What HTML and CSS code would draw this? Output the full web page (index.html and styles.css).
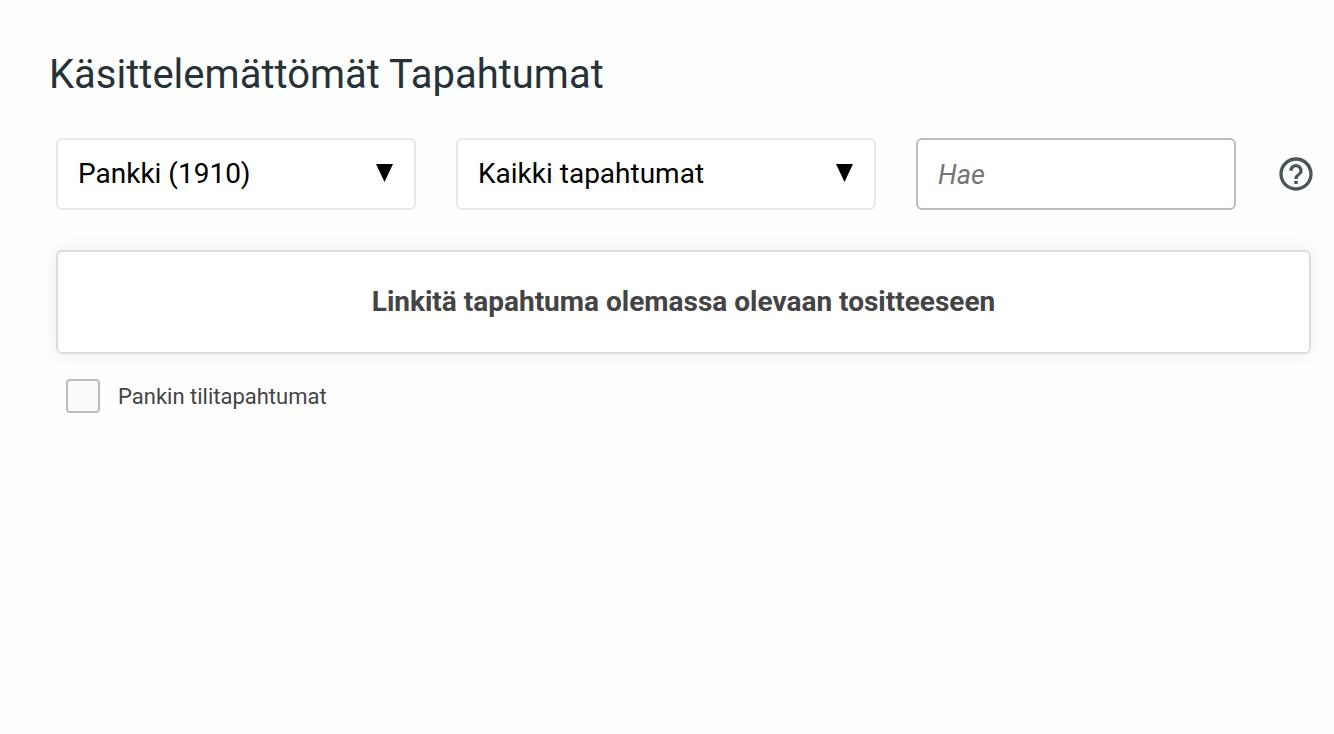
FILE: index.html
```html
<!DOCTYPE html>
<html lang="fi">
<head>
    <meta charset="UTF-8">
    <meta name="viewport" content="width=device-width, initial-scale=1.0">
    <title>Käsittelemättömät Tapahtumat</title>
    <link rel="stylesheet" href="styles.css">
</head>
<body>
    <main class="events">
        <h1>Käsittelemättömät Tapahtumat</h1>

        <form class="filters">
            <div class="select account">
                <select aria-label="Tili">
                    <option>Pankki (1910)</option>
                </select>
            </div>
            <div class="select type">
                <select aria-label="Tapahtumat">
                    <option>Kaikki tapahtumat</option>
                </select>
            </div>
            <input class="search" type="text" placeholder="Hae" aria-label="Hae">
            <button class="help" type="button" aria-label="Ohje">
                <svg viewBox="0 0 24 24" width="40" height="40" fill="currentColor">
                    <path d="M11 18h2v-2h-2v2zm1-16C6.48 2 2 6.48 2 12s4.48 10 10 10 10-4.480 10-10S17.520 2 12 2zm0 18c-4.410 0-8-3.590-8-8s3.590-8 8-8 8 3.590 8 8-3.590 8-8 8zm0-14c-2.210 0-4 1.790-4 4h2c0-1.100.9-2 2-2s2 .9 2 2c0 2-3 1.750-3 5h2c0-2.250 3-2.500 3-5 0-2.210-1.790-4-4-4z"/>
                </svg>
            </button>
        </form>

        <button class="link-event" type="button">Linkitä tapahtuma olemassa olevaan tositteeseen</button>

        <div class="check-row">
            <input type="checkbox" id="bank-events">
            <label for="bank-events">Pankin tilitapahtumat</label>
        </div>
    </main>
</body>
</html>
```
FILE: styles.css
```css
* {
    margin: 0;
    padding: 0;
    box-sizing: border-box;
}

body {
    font-family: Roboto, sans-serif;
    background: #fefefe;
    color: #444;
}

.events {
    padding: 51px 23px 24px 56px;
}

h1 {
    margin-left: -7px;
    font-size: 40px;
    line-height: 48px;
    font-weight: 400;
    color: #263238;
}

.filters {
    display: flex;
    align-items: center;
    gap: 40px;
    margin: 39px -5px 40px 0;
}

.select {
    position: relative;
}

.account {
    flex: 0 1 360px;
}

.type {
    flex: 0 1 420px;
}

.select select {
    width: 100%;
    height: 72px;
    padding: 0 60px 2px 20px;
    border: 2px solid #e8e8e8;
    border-radius: 6px;
    background: #fff;
    color: #000;
    font-family: inherit;
    font-size: 28px;
    appearance: none;
}

/* drop-down arrow */
.select::after {
    content: '';
    position: absolute;
    top: 26px;
    right: 23px;
    width: 17px;
    height: 18px;
    background: #000;
    clip-path: polygon(0 0, 100% 0, 50% 100%);
    pointer-events: none;
}

.search {
    flex: 0 1 320px;
    min-width: 0;
    height: 72px;
    padding: 2px 20px 0;
    border: 2px solid #bdbdbd;
    border-radius: 6px;
    background: #fff;
    font-family: inherit;
    font-size: 27px;
}

.search::placeholder {
    color: #757575;
    font-style: italic;
}

.help {
    flex: none;
    width: 40px;
    height: 40px;
    margin-left: auto;
    border: none;
    background: none;
    color: #48555d;
}

.help svg {
    display: block;
}

.link-event {
    width: 100%;
    height: 104px;
    padding-bottom: 2px;
    border: 2px solid #dcdcdc;
    border-radius: 6px;
    background: #fff;
    box-shadow: 0 0 16px rgba(0, 0, 0, 0.08);
    color: #444;
    font-family: inherit;
    font-size: 28px;
    font-weight: 700;
}

.check-row {
    display: flex;
    align-items: center;
    gap: 18px;
    margin: 25px 0 0 10px;
    font-size: 22px;
}

.check-row input {
    width: 34px;
    height: 34px;
    border: 2px solid #bdbdbd;
    border-radius: 4px;
    background: #fafafa;
    appearance: none;
}

.check-row input:checked {
    background: #455a64;
}
```
